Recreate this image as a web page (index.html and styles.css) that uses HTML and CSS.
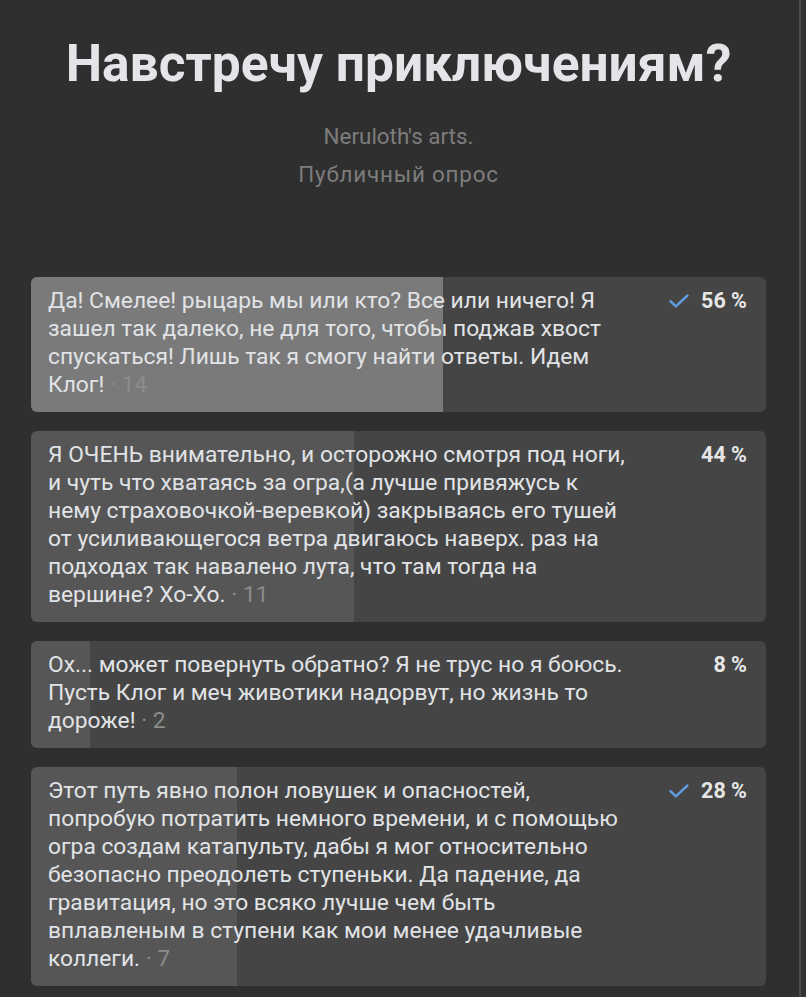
FILE: index.html
```html
<!DOCTYPE html>
<html lang="ru">
<head>
  <meta charset="UTF-8"/>
  <meta name="viewport" content="width=device-width, initial-scale=1.0"/>
  <title>Навстречу приключениям?</title>
  <link rel="stylesheet" href="styles.css">
</head>
<body>
  <div class="page">
    <!-- Шапка опроса -->
    <div class="poll-head">
      <h1 class="poll-title">Навстречу приключениям?</h1>
      <div class="poll-author">Neruloth's arts.</div>
      <div class="poll-type">Публичный опрос</div>
    </div>

    <!-- Варианты ответа -->
    <div class="poll-options">
      <div class="option leader" style="--p:56%">
        <div class="option-text">Да! Смелее! рыцарь мы или кто? Все или ничего! Я зашел так далеко, не для того, чтобы поджав хвост спускаться! Лишь так я смогу найти ответы. Идем Клог!<span class="count"> · 14</span></div>
        <div class="option-pct">
          <svg class="check" width="20" height="14" viewBox="0 0 20 14"><path d="M1.5 7.2l5.3 5.1L18.5 1.5" fill="none" stroke="#5f9ce2" stroke-width="2.4" stroke-linecap="round" stroke-linejoin="round"/></svg>
          56 %
        </div>
      </div>

      <div class="option" style="--p:44%">
        <div class="option-text">Я ОЧЕНЬ внимательно, и осторожно смотря под ноги, и чуть что хватаясь за огра,(а лучше привяжусь к нему страховочкой-веревкой) закрываясь его тушей от усиливающегося ветра двигаюсь наверх. раз на подходах так навалено лута, что там тогда на вершине? Хо-Хо.<span class="count"> · 11</span></div>
        <div class="option-pct">44 %</div>
      </div>

      <div class="option" style="--p:8%">
        <div class="option-text">Ох... может повернуть обратно? Я не трус но я боюсь. Пусть Клог и меч животики надорвут, но жизнь то дороже!<span class="count"> · 2</span></div>
        <div class="option-pct">8 %</div>
      </div>

      <div class="option" style="--p:28%">
        <div class="option-text">Этот путь явно полон ловушек и опасностей, попробую потратить немного времени, и с помощью огра создам катапульту, дабы я мог относительно безопасно преодолеть ступеньки. Да падение, да гравитация, но это всяко лучше чем быть вплавленым в ступени как мои менее удачливые коллеги.<span class="count"> · 7</span></div>
        <div class="option-pct">
          <svg class="check" width="20" height="14" viewBox="0 0 20 14"><path d="M1.5 7.2l5.3 5.1L18.5 1.5" fill="none" stroke="#5f9ce2" stroke-width="2.4" stroke-linecap="round" stroke-linejoin="round"/></svg>
          28 %
        </div>
      </div>
    </div>
  </div>
</body>
</html>
```

FILE: styles.css
```css
/* Сброс */
* { box-sizing: border-box; margin: 0; padding: 0; }
html { background: #333; }
body {
  font-family: Roboto, 'Liberation Sans', sans-serif;
  color: #e1e3e6;
}

/* Страница */
.page {
  width: 801px; min-height: 100vh;
  background: #2f2f2f;
  border-right: 2px solid #4b4b4b;
  padding: 36px 33px 0 31px;
}

/* Шапка */
.poll-head { text-align: center; }
.poll-title {
  font-size: 51.5px; line-height: 56px;
  font-weight: 700; color: #e4e5e8;
}
.poll-author,
.poll-type {
  font-size: 22.4px; line-height: 24px;
  color: #7d7d7d;
}
.poll-author { margin-top: 32px; }
.poll-type { margin-top: 14px; letter-spacing: 0.8px; }

/* Варианты */
.poll-options {
  display: flex; flex-direction: column;
  gap: 19px; margin-top: 91px;
}
.option {
  display: flex; align-items: flex-start;
  padding: 10px 19px 13px 17px;
  border-radius: 6px;
  background: linear-gradient(to right, #565656 var(--p), #454545 var(--p));
  font-size: 22.8px; line-height: 28px;
}
.option.leader {
  background: linear-gradient(to right, #7a7a7a var(--p), #454545 var(--p));
}
.option-text { flex: 1; padding-right: 42px; }
.count { color: #8c8c8c; }
.option-pct {
  flex: 0 0 80px;
  display: flex; align-items: center;
  justify-content: flex-end; gap: 12px;
  font-size: 21.5px; font-weight: 700;
  white-space: nowrap; color: #e6e6e6;
}
.check { display: block; }
```
